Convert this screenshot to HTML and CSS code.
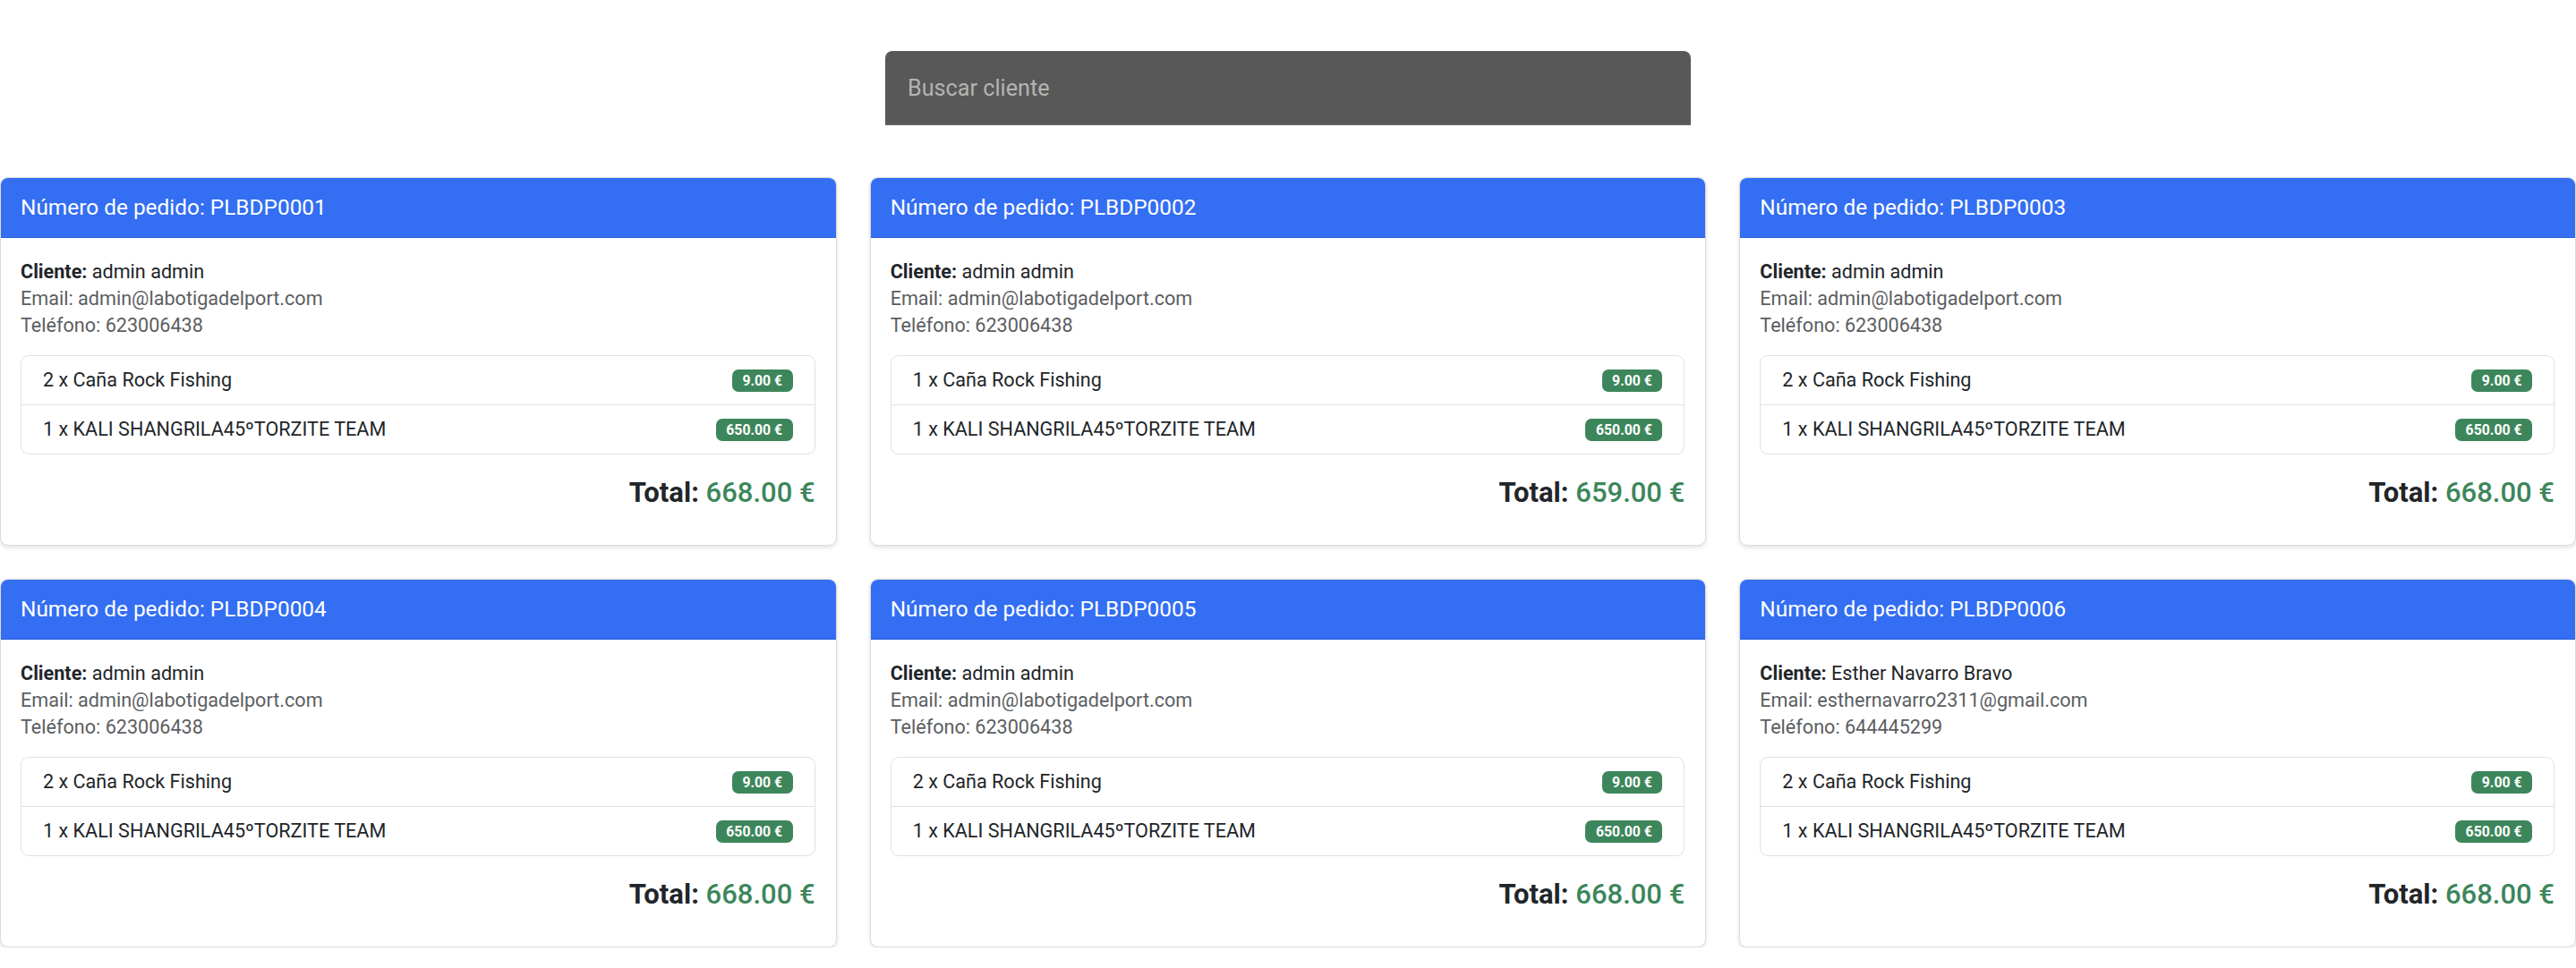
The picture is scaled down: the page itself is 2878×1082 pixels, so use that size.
FILE: index.html
```html
<!DOCTYPE html>
<html lang="es">
<head>
<meta charset="utf-8">
<title>Pedidos</title>
<link rel="stylesheet" href="styles.css">
</head>
<body>
<div class="search-wrap">
  <input class="search" type="text" placeholder="Buscar cliente">
</div>
<div class="grid">
  <div class="card">
    <div class="card-header">Número de pedido: PLBDP0001</div>
    <div class="card-body">
      <p class="client"><strong>Cliente:</strong> admin admin</p>
      <p class="muted">Email: admin@labotigadelport.com</p>
      <p class="muted">Teléfono: 623006438</p>
      <ul class="list">
        <li class="item"><span>2 x Caña Rock Fishing</span><span class="badge">9.00 €</span></li>
        <li class="item"><span>1 x KALI SHANGRILA45ºTORZITE TEAM</span><span class="badge">650.00 €</span></li>
      </ul>
      <h5 class="total"><strong>Total:</strong> <span class="amount">668.00 €</span></h5>
    </div>
  </div>
  <div class="card">
    <div class="card-header">Número de pedido: PLBDP0002</div>
    <div class="card-body">
      <p class="client"><strong>Cliente:</strong> admin admin</p>
      <p class="muted">Email: admin@labotigadelport.com</p>
      <p class="muted">Teléfono: 623006438</p>
      <ul class="list">
        <li class="item"><span>1 x Caña Rock Fishing</span><span class="badge">9.00 €</span></li>
        <li class="item"><span>1 x KALI SHANGRILA45ºTORZITE TEAM</span><span class="badge">650.00 €</span></li>
      </ul>
      <h5 class="total"><strong>Total:</strong> <span class="amount">659.00 €</span></h5>
    </div>
  </div>
  <div class="card">
    <div class="card-header">Número de pedido: PLBDP0003</div>
    <div class="card-body">
      <p class="client"><strong>Cliente:</strong> admin admin</p>
      <p class="muted">Email: admin@labotigadelport.com</p>
      <p class="muted">Teléfono: 623006438</p>
      <ul class="list">
        <li class="item"><span>2 x Caña Rock Fishing</span><span class="badge">9.00 €</span></li>
        <li class="item"><span>1 x KALI SHANGRILA45ºTORZITE TEAM</span><span class="badge">650.00 €</span></li>
      </ul>
      <h5 class="total"><strong>Total:</strong> <span class="amount">668.00 €</span></h5>
    </div>
  </div>
  <div class="card">
    <div class="card-header">Número de pedido: PLBDP0004</div>
    <div class="card-body">
      <p class="client"><strong>Cliente:</strong> admin admin</p>
      <p class="muted">Email: admin@labotigadelport.com</p>
      <p class="muted">Teléfono: 623006438</p>
      <ul class="list">
        <li class="item"><span>2 x Caña Rock Fishing</span><span class="badge">9.00 €</span></li>
        <li class="item"><span>1 x KALI SHANGRILA45ºTORZITE TEAM</span><span class="badge">650.00 €</span></li>
      </ul>
      <h5 class="total"><strong>Total:</strong> <span class="amount">668.00 €</span></h5>
    </div>
  </div>
  <div class="card">
    <div class="card-header">Número de pedido: PLBDP0005</div>
    <div class="card-body">
      <p class="client"><strong>Cliente:</strong> admin admin</p>
      <p class="muted">Email: admin@labotigadelport.com</p>
      <p class="muted">Teléfono: 623006438</p>
      <ul class="list">
        <li class="item"><span>2 x Caña Rock Fishing</span><span class="badge">9.00 €</span></li>
        <li class="item"><span>1 x KALI SHANGRILA45ºTORZITE TEAM</span><span class="badge">650.00 €</span></li>
      </ul>
      <h5 class="total"><strong>Total:</strong> <span class="amount">668.00 €</span></h5>
    </div>
  </div>
  <div class="card">
    <div class="card-header">Número de pedido: PLBDP0006</div>
    <div class="card-body">
      <p class="client"><strong>Cliente:</strong> Esther Navarro Bravo</p>
      <p class="muted">Email: esthernavarro2311@gmail.com</p>
      <p class="muted">Teléfono: 644445299</p>
      <ul class="list">
        <li class="item"><span>2 x Caña Rock Fishing</span><span class="badge">9.00 €</span></li>
        <li class="item"><span>1 x KALI SHANGRILA45ºTORZITE TEAM</span><span class="badge">650.00 €</span></li>
      </ul>
      <h5 class="total"><strong>Total:</strong> <span class="amount">668.00 €</span></h5>
    </div>
  </div>
</div>
</body>
</html>
```

FILE: styles.css
```css
* { box-sizing: border-box; }

html, body {
  margin: 0;
  padding: 0;
  background: #ffffff;
}

body {
  font-family: Roboto, "Liberation Sans", sans-serif;
  font-size: 21.6px;
  line-height: 30px;
  color: #212529;
}

.search-wrap {
  display: flex;
  justify-content: center;
  padding-top: 57px;
  padding-bottom: 58px;
}

.search {
  width: 900px;
  height: 83px;
  background: #585858;
  border: none;
  border-bottom: 1px solid #6a6a6a;
  border-radius: 8px 8px 0 0;
  padding: 0 25px;
  font-family: Roboto, "Liberation Sans", sans-serif;
  font-size: 25.2px;
  color: #eeeeee;
  outline: none;
}

.search::placeholder {
  color: #b4b4b4;
}

.grid {
  display: grid;
  grid-template-columns: repeat(3, 1fr);
  column-gap: 37px;
  row-gap: 37px;
}

.card {
  background: #ffffff;
  border: 1px solid #dcdcdc;
  border-radius: 9px;
  overflow: hidden;
  box-shadow: 0 2px 5px rgba(0, 0, 0, 0.12);
}

.card-header {
  background: #336ef3;
  color: #ffffff;
  font-size: 24.4px;
  line-height: 30px;
  padding: 18px 22px;
  border-bottom: 1px solid #2a5fd6;
}

.card-body {
  padding: 23px 23px 24px 22px;
}

.card-body p {
  margin: 0;
}

.muted {
  color: #5b5e62;
}

.client strong {
  font-weight: 700;
}

.list {
  list-style: none;
  margin: 18px 0 0;
  padding: 0;
  border: 1px solid #dfe1e5;
  border-radius: 9px;
}

.item {
  display: flex;
  justify-content: space-between;
  align-items: center;
  padding: 12px 24px;
}

.item + .item {
  border-top: 1px solid #dfe1e5;
}

.badge {
  background: #3d865b;
  color: #ffffff;
  font-size: 15.8px;
  font-weight: 700;
  line-height: 25px;
  height: 25px;
  padding: 0 11.5px;
  border-radius: 7px;
}

.total {
  margin: 24px 0 15px;
  text-align: right;
  font-size: 31px;
  line-height: 38px;
  font-weight: 500;
}

.total strong {
  font-weight: 700;
}

.amount {
  color: #3d865b;
}
```
